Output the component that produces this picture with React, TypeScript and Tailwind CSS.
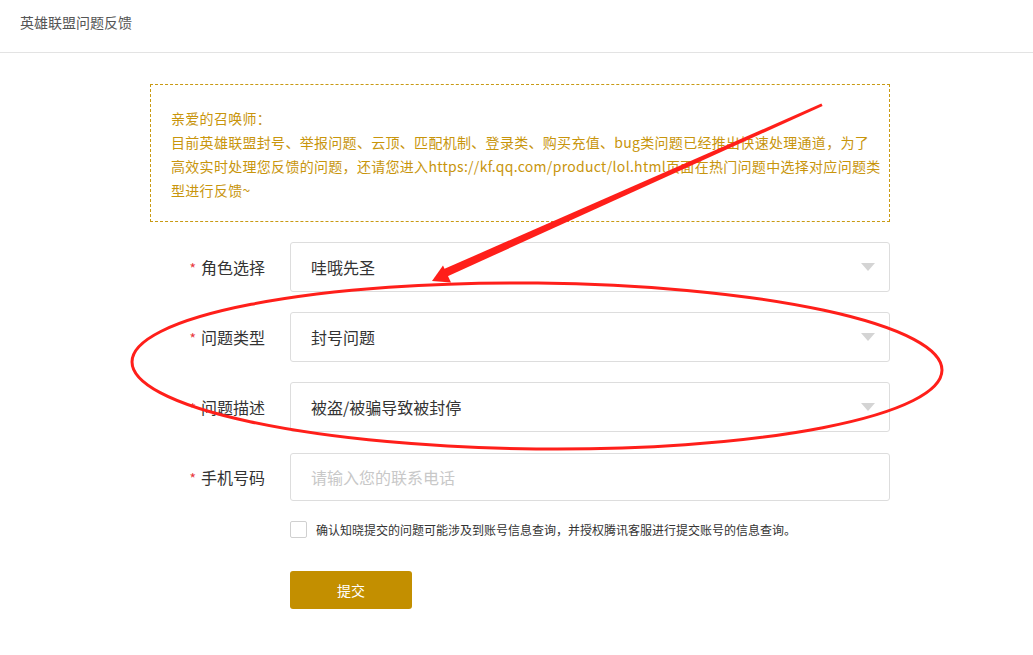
import React from "react";

const font = { fontFamily: '"Noto Sans CJK SC", "Noto Sans", sans-serif' };

function Caret() {
  return (
    <svg width="14" height="8" viewBox="0 0 14 8" className="shrink-0">
      <polygon points="0,0 14,0 7,8" fill="#d4d4d4" />
    </svg>
  );
}

function Row({ label, children }: { label: string; children: React.ReactNode }) {
  return (
    <div className="flex items-center h-[50px]">
      <div className="w-[140px] pr-[25px] flex items-center justify-end text-[16px] text-[#333]">
        <span className="text-[#e8383d] text-[14px] mr-[5px] mt-[3px]">*</span>
        <span>{label}</span>
      </div>
      {children}
    </div>
  );
}

function Select({ value }: { value: string }) {
  return (
    <div className="w-[600px] h-[50px] border border-[#dddddd] rounded-[3px] flex items-center justify-between pl-[20px] pr-[14px] text-[16px] text-[#333]">
      <span>{value}</span>
      <Caret />
    </div>
  );
}

export default function App() {
  return (
    <div className="relative w-[1033px] h-[655px] bg-white overflow-hidden" style={font}>
      <div className="h-[53px] border-b border-[#e3e3e3] flex items-center pl-[20px] text-[14px] text-[#555] pb-[7px]">
        英雄联盟问题反馈
      </div>

      <div className="ml-[150px] mt-[31px] w-[740px] h-[138px] border border-dashed border-[#c89a14] px-[20px] pt-[21px] text-[14px] leading-[24px] text-[#c8950c] tracking-[0.3px]">
        <div className="whitespace-nowrap">亲爱的召唤师：</div>
        <div className="whitespace-nowrap">目前英雄联盟封号、举报问题、云顶、匹配机制、登录类、购买充值、bug类问题已经推出快速处理通道，为了</div>
        <div className="whitespace-nowrap">高效实时处理您反馈的问题，还请您进入https://kf.qq.com/product/lol.html页面在热门问题中选择对应问题类</div>
        <div className="whitespace-nowrap">型进行反馈~</div>
      </div>

      <div className="ml-[150px] mt-[20px] flex flex-col gap-[20px]">
        <Row label="角色选择">
          <Select value="哇哦先圣" />
        </Row>
        <Row label="问题类型">
          <Select value="封号问题" />
        </Row>
        <Row label="问题描述">
          <Select value="被盗/被骗导致被封停" />
        </Row>
        <Row label="手机号码">
          <div className="w-[600px] h-[48px] border border-[#dddddd] rounded-[3px] flex items-center pl-[20px] text-[16px] text-[#c8c8c8]">
            请输入您的联系电话
          </div>
        </Row>
      </div>

      <div className="ml-[290px] mt-[19px] flex items-center h-[17px]">
        <div className="w-[17px] h-[17px] border border-[#d0d0d0] rounded-[2px] bg-white" />
        <span className="ml-[9px] text-[12px] text-[#333] whitespace-nowrap">
          确认知晓提交的问题可能涉及到账号信息查询，并授权腾讯客服进行提交账号的信息查询。
        </span>
      </div>

      <div className="ml-[290px] mt-[33px] w-[122px] h-[38px] rounded-[3px] bg-[#c38f00] flex items-center justify-center text-white text-[14px]">
        提交
      </div>

      <svg className="absolute left-0 top-0 pointer-events-none" width="1033" height="655" viewBox="0 0 1033 655">
        <ellipse cx="537" cy="366" rx="405" ry="83" fill="none" stroke="#ff1f1a" strokeWidth="3" transform="rotate(0.6 537 366)" />
        <polygon points="822.6,106 821.4,103.6 443.4,269.3 446.6,276.7" fill="#ff1f1a" />
        <polygon points="432,281 443,265.5 451,282.5" fill="#ff1f1a" />
      </svg>
    </div>
  );
}
